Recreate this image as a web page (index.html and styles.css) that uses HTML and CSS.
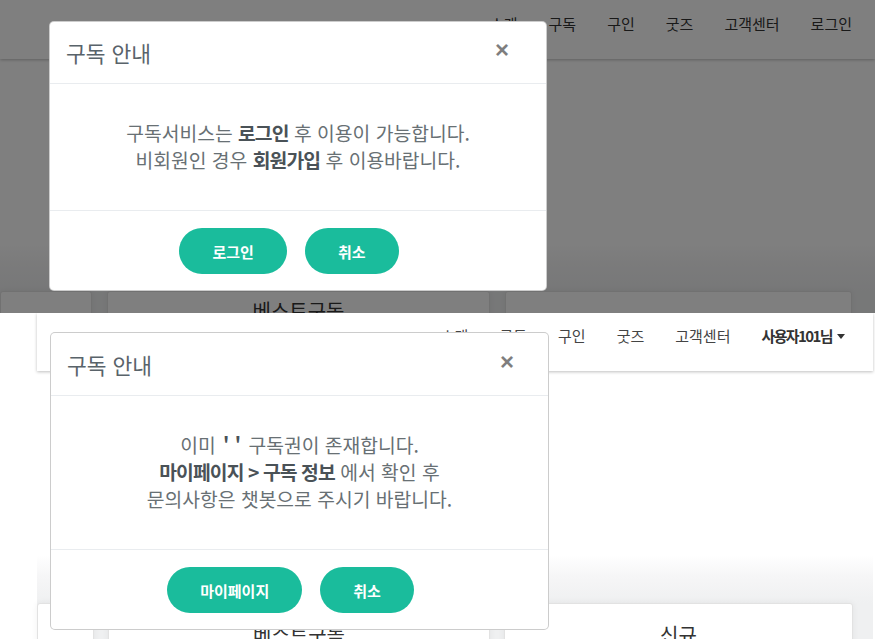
FILE: index.html
```html
<!DOCTYPE html>
<html lang="ko">
<head>
<meta charset="utf-8">
<title>구독 안내</title>
<link rel="stylesheet" href="styles.css">
</head>
<body>
<section class="shot shot-top">
  <div class="page">
    <header class="navbar">
      <nav class="menu">
        <a class="menu-item">소개</a>
        <a class="menu-item">구독</a>
        <a class="menu-item">구인</a>
        <a class="menu-item">굿즈</a>
        <a class="menu-item">고객센터</a>
        <a class="menu-item">로그인</a>
      </nav>
    </header>
    <main class="content">
      <div class="cards">
        <div class="card"></div>
        <div class="card card-main"><h3 class="card-title">베스트구독</h3></div>
        <div class="card card-main"></div>
      </div>
    </main>
  </div>
  <div class="backdrop"></div>
  <div class="modal">
    <div class="modal-header">
      <h5 class="modal-title">구독 안내</h5>
      <span class="close">&times;</span>
    </div>
    <div class="modal-body">
      <p>구독서비스는 <b>로그인</b> 후 이용이 가능합니다.<br>비회원인 경우 <b>회원가입</b> 후 이용바랍니다.</p>
    </div>
    <div class="modal-footer">
      <button class="btn">로그인</button>
      <button class="btn">취소</button>
    </div>
  </div>
</section>
<section class="shot shot-bottom">
  <div class="page">
    <header class="navbar">
      <nav class="menu">
        <a class="menu-item">소개</a>
        <a class="menu-item">구독</a>
        <a class="menu-item">구인</a>
        <a class="menu-item">굿즈</a>
        <a class="menu-item">고객센터</a>
        <a class="menu-item menu-user">사용자101님</a>
      </nav>
    </header>
    <main class="content">
      <div class="cards">
        <div class="card"></div>
        <div class="card card-main"><h3 class="card-title">베스트구독</h3></div>
        <div class="card card-main"><h3 class="card-title card-title-right">신규</h3></div>
      </div>
    </main>
  </div>
  <div class="modal">
    <div class="modal-header">
      <h5 class="modal-title">구독 안내</h5>
      <span class="close">&times;</span>
    </div>
    <div class="modal-body">
      <p>이미 <b class="quote">' '</b> 구독권이 존재합니다.<br><b>마이페이지 &gt; 구독 정보</b> 에서 확인 후<br>문의사항은 챗봇으로 주시기 바랍니다.</p>
    </div>
    <div class="modal-footer">
      <button class="btn">마이페이지</button>
      <button class="btn">취소</button>
    </div>
  </div>
</section>
</body>
</html>
```

FILE: styles.css
```css
* { box-sizing: border-box; margin: 0; padding: 0; }
html, body { width: 875px; height: 639px; overflow: hidden; }
body {
  margin: 0;
  background: #fff;
  font-family: "Noto Sans CJK KR", "Noto Sans", sans-serif;
  color: #333;
}
.shot { position: relative; overflow: hidden; background: #fff; }
.shot-top { height: 313px; }
.shot-bottom { height: 326px; }

.page { height: 100%; display: flex; flex-direction: column; background: #fff; }
.shot-bottom .page { margin-left: 37px; width: 836px; }

.navbar {
  height: 59px;
  flex: none;
  display: flex;
  justify-content: flex-end;
  padding: 14px 7.5px 0 0;
  background: #fff;
  box-shadow: 0 1px 3px rgba(0,0,0,.25);
  position: relative;
  z-index: 1;
}
.shot-bottom .navbar { height: 58px; padding: 13px 28px 0 0; }
.menu { display: flex; }
.menu-item {
  padding: 0 15.5px;
  font-size: 15px;
  line-height: 20px;
  color: #333;
}
.shot-bottom .menu-item { color: #444; }
.shot-bottom .menu-user {
  color: #333;
  font-weight: 700;
  letter-spacing: -1.6px;
  padding-right: 0;
}
.menu-user::after {
  content: "";
  display: inline-block;
  margin-left: 5px;
  vertical-align: 3px;
  border-top: 5px solid #333;
  border-left: 4px solid transparent;
  border-right: 4px solid transparent;
}

.content {
  flex: 1;
  padding-top: 232px;
  background: linear-gradient(to bottom, #fff 0, #fff 184px, #f6f6f7 205px, #eff0f1 232px);
}
.cards {
  display: grid;
  grid-template-columns: 92px 383px 347px;
  column-gap: 15px;
  height: 200px;
}
.shot-bottom .cards { grid-template-columns: 57px 382px 349px; column-gap: 14px; }
.card {
  background: #fff;
  border: 1px solid #e2e2e2;
  border-radius: 3px;
  box-shadow: 0 0 6px rgba(0,0,0,.06);
}
.card-title {
  text-align: center;
  font-size: 20px;
  font-weight: 400;
  line-height: 30px;
  color: #333;
  margin-top: 4px;
}
.shot-bottom .card-title { margin-top: 15px; }
.shot-bottom .card-title-right { margin-top: 16px; }

.backdrop { position: absolute; inset: 0; background: rgba(0,0,0,.5); z-index: 2; }

.modal {
  position: absolute;
  left: 49px;
  top: 21px;
  width: 498px;
  background: #fff;
  border: 1px solid rgba(0,0,0,.2);
  border-radius: 5px;
  z-index: 3;
}
.shot-bottom .modal { left: 50px; top: 19px; width: 499px; }

.modal-header {
  display: flex;
  align-items: center;
  padding: 16px 16px;
  border-bottom: 1px solid #e9ecef;
}
.shot-bottom .modal-header { padding-top: 17px; }
.modal-title {
  flex: 1;
  font-size: 21.5px;
  font-weight: 400;
  line-height: 29px;
  color: #59636a;
}
.close {
  font-family: "Liberation Sans", Arial, sans-serif;
  font-size: 24px;
  font-weight: 700;
  line-height: 24px;
  color: #000;
  opacity: .5;
  margin: -6px 21px 0 0;
}
.shot-bottom .close { margin-right: 18px; }

.modal-body {
  padding: 36px 16px;
  text-align: center;
  border-bottom: 1px solid #e9ecef;
}
.modal-body p {
  font-size: 19.3px;
  line-height: 27px;
  color: #687074;
}
.modal-body b { color: #4a5257; font-weight: 700; letter-spacing: -0.9px; }
.modal-body .quote { letter-spacing: 0; margin: 0 2px; }

.modal-footer {
  display: flex;
  justify-content: center;
  gap: 18px;
  padding: 17px 34px 16px 16px;
}
.btn {
  height: 46px;
  padding: 0 33px;
  border: 0;
  border-radius: 23px;
  background: #1abc9c;
  color: #fff;
  font-family: "Noto Sans CJK KR", "Noto Sans", sans-serif;
  font-size: 15px;
  font-weight: 700;
}
```
